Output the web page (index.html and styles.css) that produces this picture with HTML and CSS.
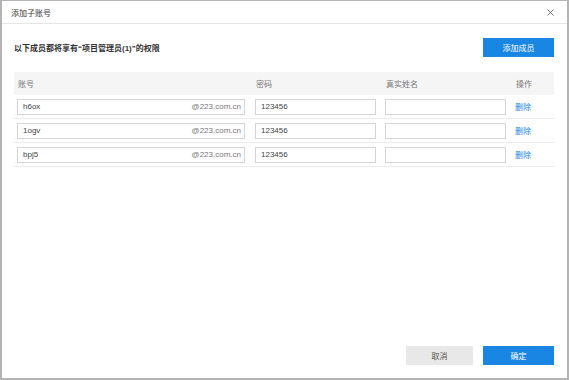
FILE: index.html
```html
<!DOCTYPE html>
<html lang="zh-CN">
<head>
    <meta charset="UTF-8">
    <title>添加子账号</title>
    <link rel="stylesheet" href="styles.css">
</head>
<body>
    <div class="dialog">
        <div class="dialog-head">
            <span class="dialog-title">添加子账号</span>
            <svg class="close" width="7" height="7" viewBox="0 0 7 7">
                <path d="M0.5 0.5 L6.5 6.5 M6.5 0.5 L0.5 6.5" stroke="#666" stroke-width="0.9" fill="none"/>
            </svg>
        </div>

        <div class="dialog-body">
            <div class="toolbar">
                <span class="tip">以下成员都将享有“项目管理员(1)”的权限</span>
                <button class="btn primary add">添加成员</button>
            </div>

            <div class="table">
                <div class="row head">
                    <div class="cell">账号</div>
                    <div class="cell">密码</div>
                    <div class="cell">真实姓名</div>
                    <div class="cell">操作</div>
                </div>

                <div class="row">
                    <div class="cell"><div class="account"><span>h6ox</span><span class="suffix">@223.com.cn</span></div></div>
                    <div class="cell"><div class="field">123456</div></div>
                    <div class="cell"><div class="field"></div></div>
                    <div class="cell"><a class="link">删除</a></div>
                </div>

                <div class="row">
                    <div class="cell"><div class="account"><span>1ogv</span><span class="suffix">@223.com.cn</span></div></div>
                    <div class="cell"><div class="field">123456</div></div>
                    <div class="cell"><div class="field"></div></div>
                    <div class="cell"><a class="link">删除</a></div>
                </div>

                <div class="row">
                    <div class="cell"><div class="account"><span>bpj5</span><span class="suffix">@223.com.cn</span></div></div>
                    <div class="cell"><div class="field">123456</div></div>
                    <div class="cell"><div class="field"></div></div>
                    <div class="cell"><a class="link">删除</a></div>
                </div>
            </div>
        </div>

        <div class="dialog-foot">
            <button class="btn cancel">取消</button>
            <button class="btn primary ok">确定</button>
        </div>
    </div>
</body>
</html>
```

FILE: styles.css
```css
* {
    margin: 0;
    padding: 0;
    box-sizing: border-box;
}

body {
    background: #fff;
    font-family: "Liberation Sans", "Noto Sans CJK SC", sans-serif;
    font-size: 8px;
    color: #333;
}

.dialog {
    width: 569px;
    height: 380px;
    border: 1px solid #b4b4b4;
    border-width: 1px 2px 2px 2px;
    display: flex;
    flex-direction: column;
}

.dialog-head {
    height: 23px;
    border-bottom: 1px solid #e6e6e6;
    padding: 0 13px 0 9px;
    display: flex;
    justify-content: space-between;
    align-items: center;
}

.dialog-title {
    color: #333;
}

.dialog-body {
    flex: 1;
    padding: 14px 13px 0 12px;
}

.toolbar {
    display: flex;
    justify-content: space-between;
    align-items: center;
    height: 19px;
    padding-left: 0;
}

.tip {
    font-weight: bold;
    color: #333;
}

.btn {
    border: none;
    height: 19px;
    font-family: inherit;
    font-size: 8px;
    cursor: pointer;
}

.primary {
    background: #1a86e4;
    color: #fff;
}

.add {
    width: 71px;
}

.table {
    margin-top: 15px;
}

.row {
    display: grid;
    grid-template-columns: 238px 130px 130px 1fr;
    height: 24px;
    align-items: center;
    border-bottom: 1px solid #ececec;
}

.row.head {
    height: 23px;
    background: #f5f5f5;
    border-bottom: none;
    color: #777;
}

.row.head .cell {
    padding-left: 4px;
}

.cell {
    padding-left: 3px;
}

.account,
.field {
    height: 16px;
    border: 1px solid #d4d4d4;
    display: flex;
    align-items: center;
    padding: 0 3px 0 5px;
    color: #444;
}

.account {
    width: 228px;
    justify-content: space-between;
}

.suffix {
    color: #777;
}

.field {
    width: 121px;
}

.link {
    color: #1a86e4;
    cursor: pointer;
}

.dialog-foot {
    display: flex;
    justify-content: flex-end;
    gap: 10px;
    padding: 0 13px 13px 0;
}

.cancel {
    width: 67px;
    background: #e8e8e8;
    color: #555;
}

.ok {
    width: 71px;
}
```
